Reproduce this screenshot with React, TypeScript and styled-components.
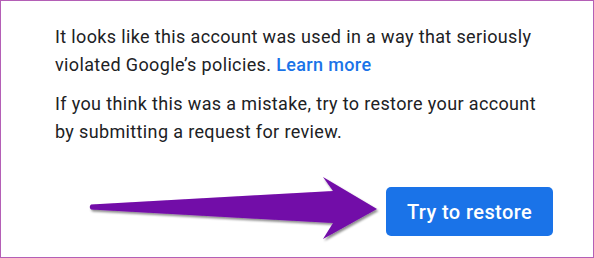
import React from "react";
import styled, { createGlobalStyle } from "styled-components";

const GlobalStyle = createGlobalStyle`
  html, body {
    margin: 0;
    padding: 0;
    background: #fff;
  }
  * {
    box-sizing: border-box;
  }
`;

const App = () => {
  return (
    <>
      <GlobalStyle />
      <Card>
        <Message>
          It looks like this account was used in a way that seriously violated
          Google’s policies. <Link href="#">Learn more</Link>
        </Message>
        <Message>
          If you think this was a mistake, try to restore your account by
          submitting a request for review.
        </Message>
        <Actions>
          <RestoreButton>Try to restore</RestoreButton>
        </Actions>
        <Pointer width="300" height="72" viewBox="0 0 300 72">
          <defs>
            <filter id="arrowShadow" x="-10%" y="-20%" width="120%" height="150%">
              <feDropShadow dx="1.5" dy="2" stdDeviation="1.2" floodColor="#000" floodOpacity="0.45" />
            </filter>
          </defs>
          <path
            filter="url(#arrowShadow)"
            fill="#7209a8"
            d="M7 33.5 L249 20 L239 6 L293 38 L239 68 L249 52 L7 38.5 Q4.5 36 7 33.5 Z"
          />
        </Pointer>
      </Card>
    </>
  );
};

export default App;

const Card = styled.div`
  position: relative;
  width: 594px;
  height: 258px;
  border: 1px solid #b45fb6;
  padding: 22px 48px 0 54px;
  background: #fff;
  font-family: Roboto, "Liberation Sans", Arial, sans-serif;
  color: #202124;
`;

const Message = styled.p`
  margin: 0 0 11px;
  font-size: 18px;
  line-height: 28px;
  letter-spacing: 0.36px;
`;

const Link = styled.a`
  color: #1a73e8;
  font-weight: 500;
  text-decoration: none;
`;

const Actions = styled.div`
  display: flex;
  justify-content: flex-end;
  margin-top: 41px;
  margin-right: -8px;
`;

const RestoreButton = styled.button`
  width: 167px;
  height: 49px;
  border: none;
  border-radius: 5px;
  background: #1a73e8;
  color: #fff;
  font-family: Roboto, "Liberation Sans", Arial, sans-serif;
  font-size: 20px;
  font-weight: 500;
  letter-spacing: 0.4px;
  cursor: pointer;
`;

const Pointer = styled.svg`
  position: absolute;
  left: 83px;
  top: 170px;
`;
